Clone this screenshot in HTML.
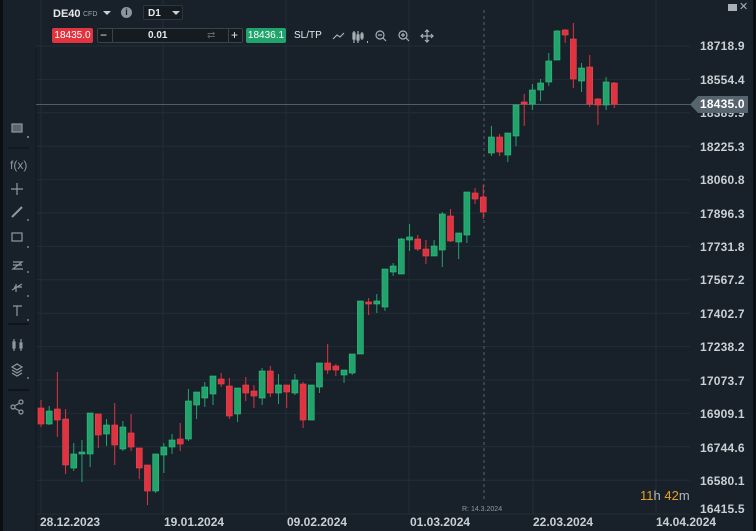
<!DOCTYPE html>
<html><head><meta charset="utf-8"><style>
*{margin:0;padding:0;box-sizing:border-box}
body{width:756px;height:531px;overflow:hidden;background:#0b0e10;font-family:"Liberation Sans",sans-serif;position:relative}
#main{position:absolute;left:3px;top:0;width:750px;height:531px;background:#18212a}
.t{position:absolute;white-space:nowrap}
.ax{position:absolute;left:700px;font-size:12px;color:#c9cfd3;font-weight:bold;letter-spacing:0.2px}
.dt{position:absolute;top:515px;font-size:12px;color:#c9cfd3;font-weight:bold}
.ic{position:absolute;color:#9aa3a9;font-size:12px}
</style></head><body>
<div id="main"></div>
<svg id="chart" width="756" height="531" style="position:absolute;left:0;top:0">
</svg>
<!-- top toolbar -->
<div class="t" style="left:53px;top:8px;font-size:11px;font-weight:bold;color:#e6eaec">DE40</div>
<div class="t" style="left:83px;top:11px;font-size:7px;color:#9aa3a9">CFD</div>
<div class="t" style="left:103px;top:11px;width:0;height:0;border-left:4px solid transparent;border-right:4px solid transparent;border-top:4px solid #c9cfd3"></div>
<div class="t" style="left:121px;top:7px;width:11px;height:11px;border-radius:50%;background:#8c959b;color:#18212a;font-size:9px;font-weight:bold;text-align:center;line-height:11px">i</div>
<div class="t" style="left:143px;top:5px;width:40px;height:15px;border:1px solid #2c363d;border-radius:2px;background:#141b21"></div>
<div class="t" style="left:148px;top:8px;font-size:10px;color:#e6eaec;font-weight:bold">D1</div>
<div class="t" style="left:172px;top:11px;width:0;height:0;border-left:4px solid transparent;border-right:4px solid transparent;border-top:4px solid #c9cfd3"></div>

<div class="t" style="left:52px;top:28px;width:41px;height:15px;background:#e2343f;border-radius:2px;color:#fff;font-size:10px;text-align:center;line-height:15px">18435.0</div>
<div class="t" style="left:97px;top:28px;width:146px;height:15px;border:1px solid #38434a;border-radius:2px;background:#141b21"></div>
<div class="t" style="left:112px;top:28px;width:1px;height:15px;background:#38434a"></div>
<div class="t" style="left:228px;top:28px;width:1px;height:15px;background:#38434a"></div>
<div class="t" style="left:100px;top:28px;font-size:12px;color:#e6eaec;line-height:15px">−</div>
<div class="t" style="left:231px;top:28px;font-size:12px;color:#e6eaec;line-height:15px">+</div>
<div class="t" style="left:148px;top:28px;font-size:10px;color:#e6eaec;font-weight:bold;line-height:15px">0.01</div>
<div class="t" style="left:207px;top:28px;font-size:10px;color:#5c666c;line-height:15px">⇄</div>
<div class="t" style="left:246px;top:28px;width:40px;height:15px;background:#1fa56c;border-radius:2px;color:#fff;font-size:10px;text-align:center;line-height:15px">18436.1</div>
<div class="t" style="left:294px;top:28px;font-size:10px;color:#e6eaec;line-height:15px">SL/TP</div>
<svg style="position:absolute;left:330px;top:26px" width="110" height="20" fill="none" stroke="#a8b0b5" stroke-width="1.2">
<path d="M3 13 L7 9 L10 11 L14 7"/>
<path d="M24 5v12M23 7h2v6h-2zM28 5v12M27 9h2v5h-2zM32 6v8M31 8h2v4h-2z"/>
<path d="M37 16h1" stroke-width="2"/>
<circle cx="50" cy="9" r="4"/><path d="M48 9h4M53 12l3 3"/>
<circle cx="73" cy="9" r="4"/><path d="M71 9h4M73 7v4M76 12l3 3"/>
<path d="M97 4v12M91 10h12M95 6l2-2 2 2M95 14l2 2 2-2M93 8l-2 2 2 2M101 8l2 2-2 2"/>
</svg>
<!-- right top icons -->
<div class="t" style="left:728px;top:4px;width:9px;height:7px;background:#a8b0b5;border-top:2px solid #a8b0b5"></div>
<div class="t" style="left:739px;top:0px;font-size:11px;color:#a8b0b5">✕</div>
<!-- left toolbar -->
<svg style="position:absolute;left:0;top:110px" width="36" height="310" fill="none" stroke="#8f989e" stroke-width="1.2">
<rect x="12" y="14" width="10" height="8" fill="#5b656b" stroke="#8f989e"/><path d="M27 27h2" stroke-width="1.5"/>
<path d="M8 38h21" stroke="#0b0e10" stroke-width="1"/>
<path d="M11 79h12M17 73v12"/>
<path d="M12 107l10-10" stroke-width="2"/><path d="M27 110h2"/>
<rect x="12" y="123" width="10" height="8"/><path d="M27 137h2"/>
<path d="M13 152h9l-9 7h10M13 155h9" /><path d="M27 162h2"/>
<path d="M12 180l10-6M14 177h8M16 174v8"/><path d="M27 186h2"/>
<path d="M13 196h9M17 196v10"/><path d="M27 210h2"/>
<path d="M8 214h21" stroke="#0b0e10"/>
<path d="M14 229v12M21 229v12M13 232h2v6h-2zM20 233h2v5h-2z"/>
<path d="M12 257l5-3 5 3-5 3zM12 260l5 3 5-3M12 263l5 3 5-3"/><path d="M27 268h2"/>
<path d="M8 280h21" stroke="#0b0e10"/>
<circle cx="13" cy="297" r="2"/><circle cx="21" cy="292" r="2"/><circle cx="21" cy="302" r="2"/><path d="M14 296l6-3M14 298l6 3"/>
</svg>
<div class="t" style="left:10px;top:158px;font-size:12px;color:#8f989e">f(x)</div>
<!-- axis labels -->
<div class="ax" style="top:39px">18718.9</div>
<div class="ax" style="top:73px">18554.4</div>
<div class="ax" style="top:106px">18389.9</div>
<div class="ax" style="top:140px">18225.3</div>
<div class="ax" style="top:173px">18060.8</div>
<div class="ax" style="top:207px">17896.3</div>
<div class="ax" style="top:240px">17731.8</div>
<div class="ax" style="top:273px">17567.2</div>
<div class="ax" style="top:307px">17402.7</div>
<div class="ax" style="top:340px">17238.2</div>
<div class="ax" style="top:374px">17073.7</div>
<div class="ax" style="top:407px">16909.1</div>
<div class="ax" style="top:441px">16744.6</div>
<div class="ax" style="top:474px">16580.1</div>
<div class="ax" style="top:502px">16415.5</div>
<svg style="position:absolute;left:690px;top:96px" width="58" height="17"><path d="M0 8.5L8 0H58V17H8Z" fill="#56656d"/></svg>
<div class="ax" style="top:97px;color:#fff">18435.0</div>
<div class="t" style="left:640px;top:488px;font-size:13px;color:#b0b7bb"><span style="color:#e8a020">11</span>h <span style="color:#e8a020">42</span>m</div>
<div class="t" style="left:462px;top:506px;font-size:7px;color:#8f989e">R: 14.3.2024</div>
<div class="dt" style="left:40px">28.12.2023</div>
<div class="dt" style="left:164px">19.01.2024</div>
<div class="dt" style="left:287px">09.02.2024</div>
<div class="dt" style="left:410px">01.03.2024</div>
<div class="dt" style="left:533px">22.03.2024</div>
<div class="dt" style="left:656px">14.04.2024</div>
<script>
var d=[[0,408,424,400,427],[1,411,424,406,425],[0,409,420,372,437],[0,419,465,409,474],[1,454,468,443,471],[1,452,454,440,482],[1,413,454,413,467],[0,414,435,414,448],[1,425,434,419,446],[0,425,445,403,465],[1,427,449,421,451],[0,433,447,414,451],[0,448,468,448,479],[0,465,491,465,505],[1,454,491,454,493],[1,447,455,443,473],[1,440,447,434,454],[0,439,444,423,451],[1,401,439,389,441],[1,392,405,392,419],[1,387,398,382,407],[1,376,394,376,405],[0,379,384,373,387],[0,386,416,378,419],[1,388,414,388,422],[0,385,393,377,401],[0,391,396,385,408],[1,371,398,368,405],[0,371,393,366,397],[1,385,393,374,404],[0,385,392,385,408],[1,380,393,374,395],[0,384,420,382,428],[1,385,420,385,420],[1,363,387,363,393],[0,363,370,344,374],[0,366,370,364,376],[1,370,375,370,383],[1,354,373,354,375],[1,301,354,301,354],[0,302,304,298,315],[1,301,304,294,313],[1,269,307,269,311],[1,266,272,263,276],[1,239,274,238,274],[1,237,240,224,251],[0,239,249,235,251],[0,249,256,240,264],[1,246,256,240,256],[1,214,250,212,267],[0,216,241,209,242],[1,233,242,233,259],[1,192,235,192,243],[0,193,199,188,204],[0,197,212,185,219],[1,137,153,126,156],[0,137,152,134,156],[1,133,155,133,162],[1,105,136,105,146],[0,102,104,94,126],[1,90,104,84,110],[1,83,90,79,101],[1,61,82,53,86],[1,31,60,30,60],[0,30,35,29,43],[0,39,79,23,88],[1,68,81,63,92],[0,67,104,55,107],[0,99,105,98,125],[1,82,105,77,110],[0,83,104,82,108]];
var s='';
for(var i=0;i<15;i++){var y=46+i*33.4;if(i==14)y=514;s+='<line x1="36" x2="690" y1="'+y+'" y2="'+y+'" stroke="#222d35"/>';}
[41,163,286,409,533,656].forEach(function(x){s+='<line x1="'+x+'" x2="'+x+'" y1="0" y2="514" stroke="#222d35"/>';});
s+='<line x1="36" x2="36" y1="48" y2="531" stroke="#11171b"/>';
s+='<line x1="484" x2="484" y1="10" y2="500" stroke="#56616a" stroke-dasharray="3,3"/>';
s+='<line x1="36" x2="692" y1="104.5" y2="104.5" stroke="#4f5d66"/>';
d.forEach(function(c,i){var x=41+i*8.19;var col=c[0]?'#22a36c':'#de3340';var bc=c[0]?'#2fc283':'#ee4451';
s+='<line x1="'+x+'" x2="'+x+'" y1="'+c[3]+'" y2="'+c[4]+'" stroke="'+col+'" stroke-width="1"/>';
var h=Math.max(c[2]-c[1],2);s+='<rect x="'+(x-3)+'" y="'+c[1]+'" width="6" height="'+h+'" fill="'+col+'" stroke="'+bc+'" stroke-width="0.6"/>';});
document.getElementById('chart').innerHTML=s;
</script>
</body></html>
